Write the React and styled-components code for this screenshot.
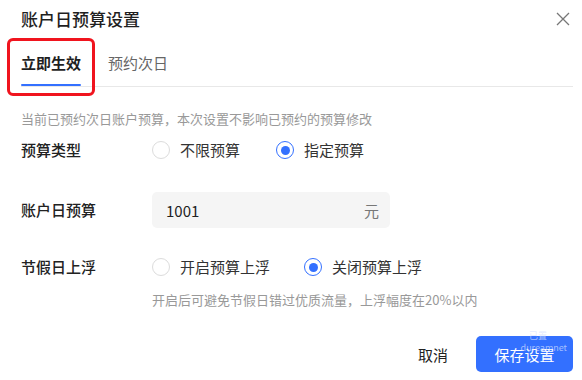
import React, { useState } from "react"
import styled, { createGlobalStyle } from "styled-components"

const GlobalStyle = createGlobalStyle`
  body {
    margin: 0;
    background: #fff;
    font-family: "Noto Sans CJK SC", "Noto Sans", sans-serif;
    color: #222;
  }
`

const Modal = styled.div`
  width: 582px;
  height: 380px;
  background: #fff;
  overflow: hidden;
  position: relative;
`

const Header = styled.div`
  height: 38px;
  display: flex;
  align-items: center;
  justify-content: space-between;
  padding: 0 12px 0 21px;
`

const Title = styled.div`
  font-size: 17px;
  font-weight: 500;
  line-height: 24px;
  color: #1f1f1f;
`

const Close = styled.button`
  border: 0;
  background: none;
  padding: 0;
  width: 14px;
  height: 14px;
  display: flex;
  cursor: pointer;
`

const TabBar = styled.div`
  margin: 0 9px 0 21px;
  height: 48px;
  display: flex;
  gap: 27px;
  border-bottom: 1px solid #e8e8e8;
`

const Tab = styled.div`
  position: relative;
  display: flex;
  align-items: center;
  padding-top: 2px;
  font-size: 15px;
  line-height: 20px;
  font-weight: ${p => (p.$active ? 600 : 400)};
  color: ${p => (p.$active ? "#1f1f1f" : "#666")};
  cursor: pointer;

  &::after {
    content: "";
    position: absolute;
    left: 0;
    right: 0;
    bottom: 0;
    height: 2px;
    border-radius: 1px;
    background: ${p => (p.$active ? "#3370ff" : "transparent")};
  }
`

const Highlight = styled.span`
  position: absolute;
  left: -14px;
  right: -14px;
  top: 0;
  bottom: -10px;
  border: 3px solid #f0141e;
  border-radius: 6px;
  pointer-events: none;
`

const Body = styled.div`
  padding: 0 9px 0 21px;
`

const Note = styled.div`
  margin-top: 22px;
  font-size: 13px;
  line-height: 20px;
  color: #999;
`

const Row = styled.div`
  display: grid;
  grid-template-columns: 131px 1fr;
  align-items: center;
  min-height: 36px;
  margin-top: ${p => p.$top}px;
`

const Label = styled.div`
  font-size: 15px;
  line-height: 20px;
  color: #222;
  font-weight: 500;
`

const RadioGroup = styled.div`
  display: flex;
  align-items: center;
  gap: ${p => p.$gap}px;
`

const RadioItem = styled.label`
  display: flex;
  align-items: center;
  gap: 10px;
  font-size: 15px;
  line-height: 20px;
  color: #333;
  cursor: pointer;
`

const Circle = styled.span`
  width: 18px;
  height: 18px;
  box-sizing: border-box;
  border-radius: 50%;
  border: ${p => (p.$checked ? "1.5px solid #3370ff" : "1px solid #dcdcdc")};
  display: flex;
  align-items: center;
  justify-content: center;

  &::after {
    content: "";
    width: 9px;
    height: 9px;
    border-radius: 50%;
    background: ${p => (p.$checked ? "#3370ff" : "transparent")};
  }
`

const InputBox = styled.div`
  width: 238px;
  height: 36px;
  box-sizing: border-box;
  background: #f5f5f5;
  border-radius: 5px;
  display: flex;
  align-items: center;
  justify-content: space-between;
  padding: 0 11px 0 14px;
  font-size: 15px;
  color: #222;
`

const Unit = styled.span`
  color: #777;
  font-size: 15px;
`

const Hint = styled.div`
  margin: 5px 0 0 131px;
  font-size: 13px;
  line-height: 20px;
  color: #999;
`

const Footer = styled.div`
  margin-top: 26px;
  display: flex;
  justify-content: flex-end;
  align-items: center;
  gap: 28px;
`

const TextButton = styled.button`
  border: 0;
  background: none;
  padding: 0;
  font-family: inherit;
  font-size: 15px;
  color: #222;
  cursor: pointer;
`

const PrimaryButton = styled.button`
  position: relative;
  width: 97px;
  height: 36px;
  border: 0;
  border-radius: 5px;
  background: #3370ff;
  color: #fff;
  font-family: inherit;
  font-size: 15px;
  cursor: pointer;
`

const Watermark = styled.span`
  position: absolute;
  right: ${p => p.$right}px;
  top: ${p => p.$top}px;
  font-size: ${p => p.$size}px;
  line-height: 10px;
  color: rgba(215, 225, 255, 0.7);
  pointer-events: none;
  white-space: nowrap;
`

const Radio = ({ checked, children, onClick }) => (
  <RadioItem onClick={onClick}>
    <Circle $checked={checked} />
    {children}
  </RadioItem>
)

export default function App() {
  const [tab, setTab] = useState(0)
  const [type, setType] = useState(1)
  const [float, setFloat] = useState(1)

  return (
    <Modal>
      <GlobalStyle />
      <Header>
        <Title>账户日预算设置</Title>
        <Close>
          <svg width="14" height="14" viewBox="0 0 14 14">
            <path d="M1 1L13 13M13 1L1 13" stroke="#777" strokeWidth="1.3" />
          </svg>
        </Close>
      </Header>

      <TabBar>
        <Tab $active={tab === 0} onClick={() => setTab(0)}>
          立即生效
          <Highlight />
        </Tab>
        <Tab $active={tab === 1} onClick={() => setTab(1)}>
          预约次日
        </Tab>
      </TabBar>

      <Body>
        <Note>当前已预约次日账户预算，本次设置不影响已预约的预算修改</Note>

        <Row $top={3}>
          <Label>预算类型</Label>
          <RadioGroup $gap={36}>
            <Radio checked={type === 0} onClick={() => setType(0)}>不限预算</Radio>
            <Radio checked={type === 1} onClick={() => setType(1)}>指定预算</Radio>
          </RadioGroup>
        </Row>

        <Row $top={24}>
          <Label>账户日预算</Label>
          <InputBox>
            <span>1001</span>
            <Unit>元</Unit>
          </InputBox>
        </Row>

        <Row $top={21}>
          <Label>节假日上浮</Label>
          <RadioGroup $gap={34}>
            <Radio checked={float === 0} onClick={() => setFloat(0)}>开启预算上浮</Radio>
            <Radio checked={float === 1} onClick={() => setFloat(1)}>关闭预算上浮</Radio>
          </RadioGroup>
        </Row>
        <Hint>开启后可避免节假日错过优质流量，上浮幅度在20%以内</Hint>

        <Footer>
          <TextButton>取消</TextButton>
          <PrimaryButton>
            保存设置
            <Watermark $right={26} $top={-5} $size={9}>已置</Watermark>
            <Watermark $right={6} $top={7} $size={9}>dureamnet</Watermark>
          </PrimaryButton>
        </Footer>
      </Body>
    </Modal>
  )
}
